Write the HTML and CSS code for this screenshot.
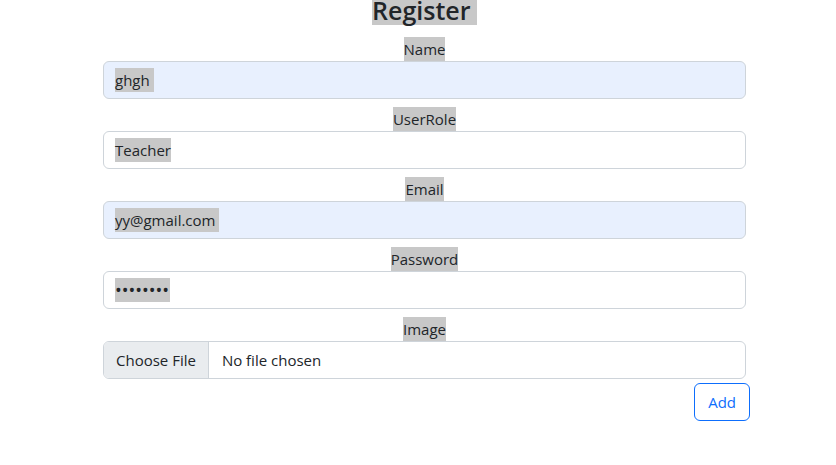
FILE: index.html
```html
<!DOCTYPE html>
<html lang="en">
<head>
<meta charset="utf-8">
<title>Register</title>
<link rel="stylesheet" href="styles.css">
</head>
<body>
<div class="page">
  <form class="form">
    <h2 class="title"><span class="sel">Register </span></h2>
    <div class="group">
      <label class="label"><span class="sel">Name</span></label>
      <div class="field autofill"><span class="sel">ghgh </span></div>
    </div>
    <div class="group">
      <label class="label"><span class="sel">UserRole</span></label>
      <div class="field"><span class="sel">Teacher</span></div>
    </div>
    <div class="group">
      <label class="label"><span class="sel">Email</span></label>
      <div class="field autofill"><span class="sel">yy@gmail.com </span></div>
    </div>
    <div class="group">
      <label class="label"><span class="sel">Password</span></label>
      <div class="field"><span class="sel dots">&bull;&bull;&bull;&bull;&bull;&bull;&bull;&bull;</span></div>
    </div>
    <div class="group last">
      <label class="label"><span class="sel">Image</span></label>
      <div class="field file">
        <span class="file-btn">Choose File</span>
        <span class="file-name">No file chosen</span>
      </div>
    </div>
    <div class="actions">
      <button type="button" class="btn-outline">Add</button>
    </div>
  </form>
</div>
</body>
</html>
```
FILE: styles.css
```css
* { box-sizing: border-box; }
body {
  margin: 0;
  font-family: "Open Sans", "Noto Sans", sans-serif;
  font-size: 15px;
  color: #212529;
  background: #fff;
}
.page {
  padding-left: 103px;
}
.form {
  width: 643px;
}
.sel {
  background: #c8c8c8;
  display: inline-block;
  line-height: 24px;
  white-space: pre;
}
.title {
  margin: 0 0 12px;
  height: 25px;
  text-align: center;
  font-size: 25px;
  font-weight: 600;
  line-height: 25px;
}
.title .sel {
  line-height: 21px;
  padding-bottom: 4px;
  height: 25px;
  vertical-align: top;
}
.group {
  text-align: center;
  margin-bottom: 8px;
}
.group.last { margin-bottom: 4px; }
.label {
  display: block;
  line-height: 24px;
  height: 24px;
}
.field {
  height: 38px;
  border: 1px solid #ced4da;
  border-radius: 6px;
  padding: 6px 11px;
  text-align: left;
  background: #fff;
  display: flex;
  align-items: center;
}
.field.autofill {
  background: #e8f0fe;
}
.dots {
  font-size: 18px;
  letter-spacing: 0;
  padding-right: 1px;
}
.field.file {
  padding: 0;
  overflow: hidden;
}
.file-btn {
  height: 100%;
  display: flex;
  align-items: center;
  padding: 0 12px;
  background: #e9ecef;
  border-right: 1px solid #ced4da;
}
.file-name {
  padding-left: 13px;
}
.actions {
  display: flex;
  justify-content: flex-end;
  margin-right: -4px;
}
.btn-outline {
  font-family: inherit;
  font-size: 15px;
  height: 38px;
  padding: 0 13px;
  color: #0d6efd;
  background: #fff;
  border: 1px solid #0d6efd;
  border-radius: 6px;
  line-height: 24px;
}
```
